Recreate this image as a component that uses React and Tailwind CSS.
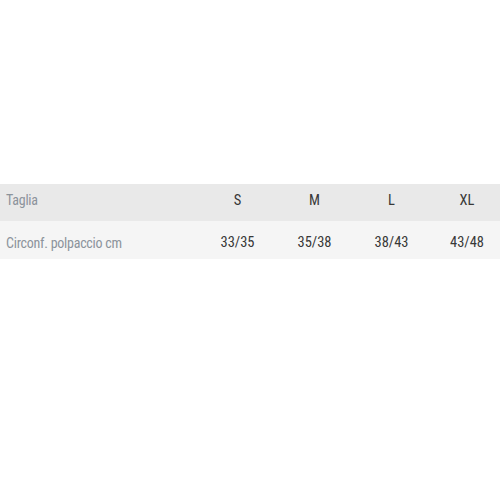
const sizes = ["S", "M", "L", "XL"];
const values = ["33/35", "35/38", "38/43", "43/48"];

const App = () => {
    return (
        <div className="w-[500px] h-[500px] bg-white pt-[184px]">
            <div className="font-['Roboto_Condensed','Liberation_Sans_Narrow',Roboto,sans-serif] text-[14px] tracking-[-0.25px]">
                <div className="grid grid-cols-[199px_77px_77px_77px_74px] items-center h-[37px] pb-[4px] bg-[#e9e9e9]">
                    <div className="pl-[6px] text-[#8c939b]">Taglia</div>
                    {sizes.map(s => (
                        <div key={s} className="text-center text-[14.5px] tracking-normal text-[#383838]">{s}</div>
                    ))}
                </div>
                <div className="grid grid-cols-[199px_77px_77px_77px_74px] items-center h-[38px] pt-[6px] bg-[#f5f5f5]">
                    <div className="pl-[6px] text-[#8c939b]">Circonf. polpaccio cm</div>
                    {values.map(v => (
                        <div key={v} className="text-center text-[14.5px] tracking-normal text-[#383838]">{v}</div>
                    ))}
                </div>
            </div>
        </div>
    );
};

export default App;
